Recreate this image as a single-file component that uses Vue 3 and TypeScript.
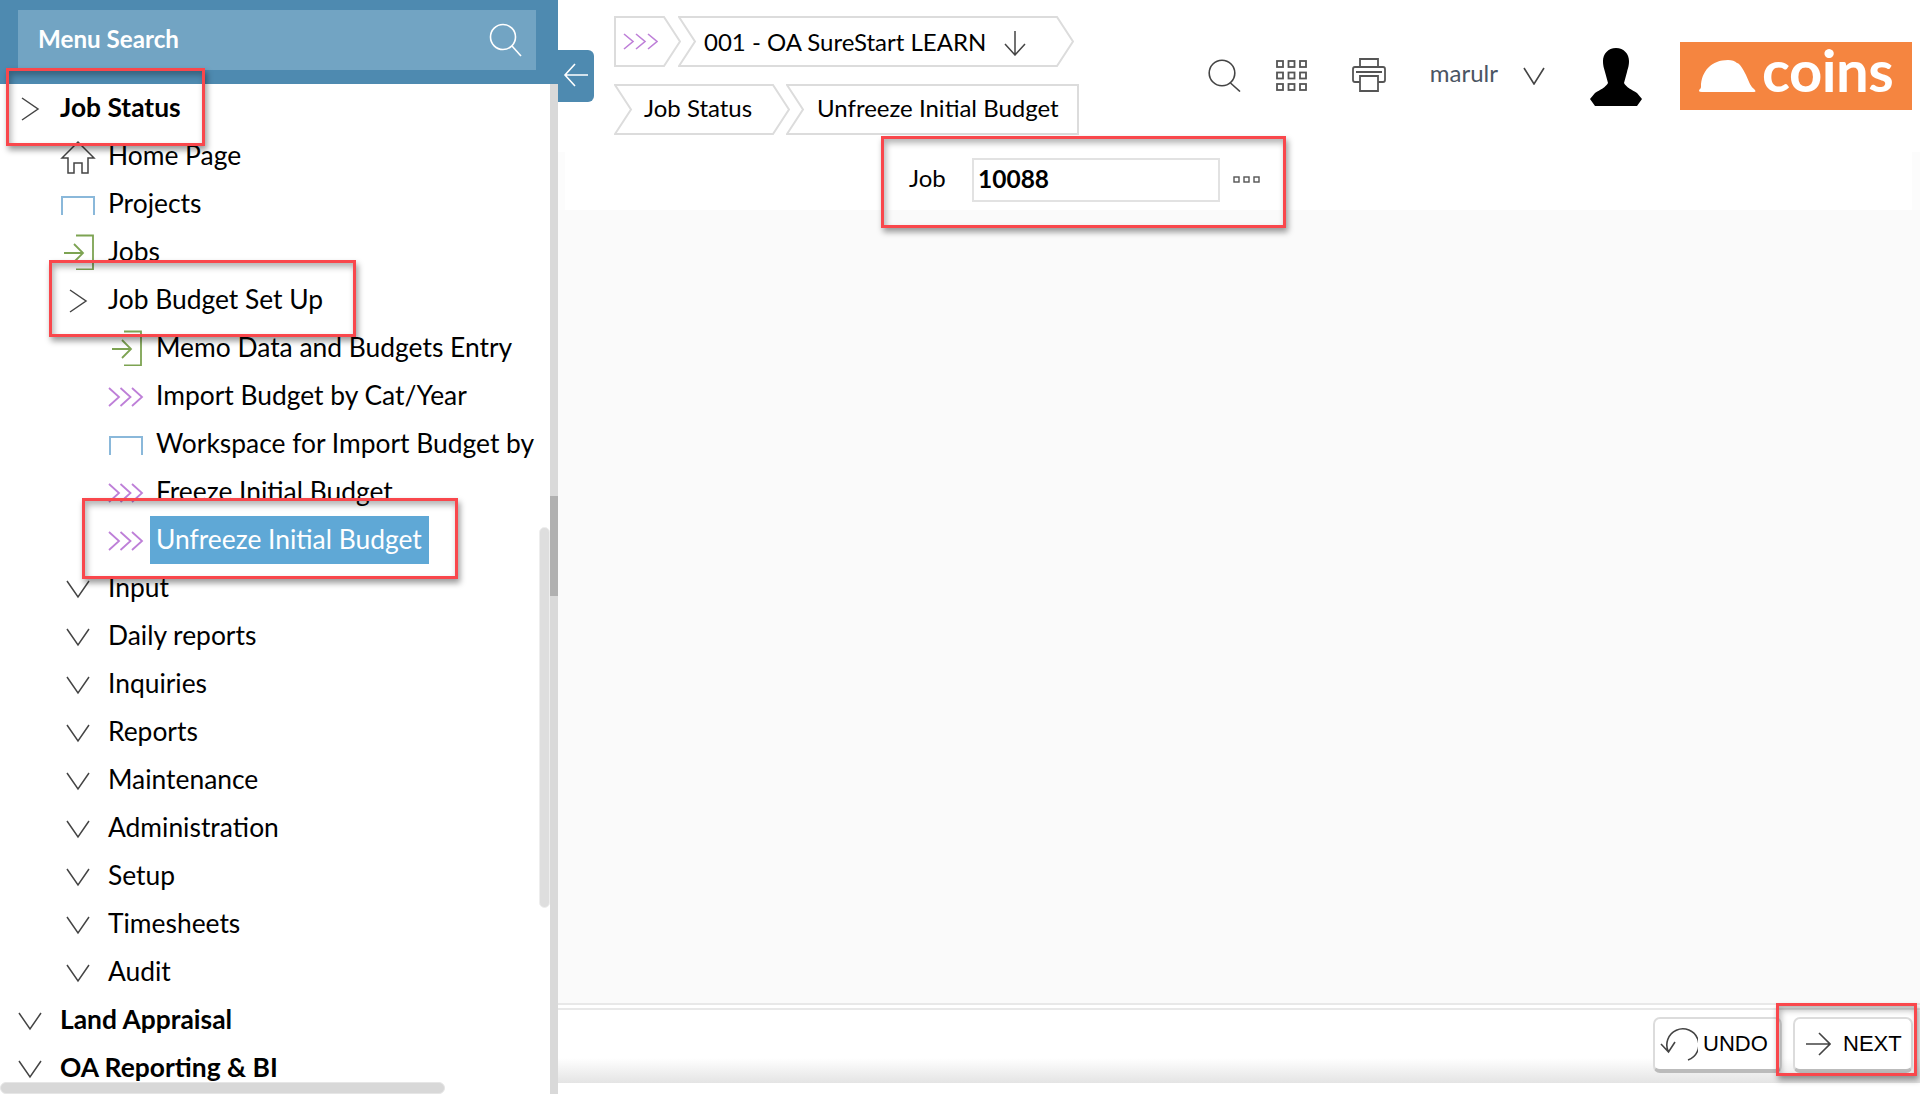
<script setup lang="ts">
type Icon = 'right' | 'down' | 'home' | 'rect' | 'enter' | 'run'
interface Row { label: string; level: 0 | 1 | 2; icon: Icon; active?: boolean }

const rows: Row[] = [
  { label: 'Job Status', level: 0, icon: 'right' },
  { label: 'Home Page', level: 1, icon: 'home' },
  { label: 'Projects', level: 1, icon: 'rect' },
  { label: 'Jobs', level: 1, icon: 'enter' },
  { label: 'Job Budget Set Up', level: 1, icon: 'right' },
  { label: 'Memo Data and Budgets Entry', level: 2, icon: 'enter' },
  { label: 'Import Budget by Cat/Year', level: 2, icon: 'run' },
  { label: 'Workspace for Import Budget by', level: 2, icon: 'rect' },
  { label: 'Freeze Initial Budget', level: 2, icon: 'run' },
  { label: 'Unfreeze Initial Budget', level: 2, icon: 'run', active: true },
  { label: 'Input', level: 1, icon: 'down' },
  { label: 'Daily reports', level: 1, icon: 'down' },
  { label: 'Inquiries', level: 1, icon: 'down' },
  { label: 'Reports', level: 1, icon: 'down' },
  { label: 'Maintenance', level: 1, icon: 'down' },
  { label: 'Administration', level: 1, icon: 'down' },
  { label: 'Setup', level: 1, icon: 'down' },
  { label: 'Timesheets', level: 1, icon: 'down' },
  { label: 'Audit', level: 1, icon: 'down' },
  { label: 'Land Appraisal', level: 0, icon: 'down' },
  { label: 'OA Reporting & BI', level: 0, icon: 'down' },
]
const grid = [0, 1, 2].flatMap((r) => [0, 1, 2].map((c) => ({ x: 1 + c * 11.5, y: 1 + r * 11.5 })))

// Only the "ti" pair takes Lato's discretionary ligature; ct/st/ch stay plain.
function parts(text: string): { text: string; lig: boolean }[] {
  return text.split(/(ti)/).filter(Boolean).map((p) => ({ text: p, lig: p === 'ti' }))
}
</script>

<template>
  <div class="app">
    <aside class="sidebar">
      <div class="side-head">
        <div class="menu-search">
          <span class="ms-text">Menu Search</span>
          <svg class="ms-icon" width="34" height="34" viewBox="0 0 34 34"><circle cx="14" cy="14" r="12.5" /><path d="M23 23 L32 33" /></svg>
        </div>
      </div>
      <button class="collapse" type="button" aria-label="Collapse">
        <svg width="26" height="26" viewBox="0 0 26 26"><path d="M25 13 H2 M12 2 L2 13 L12 24" /></svg>
      </button>
      <nav class="tree">
        <div v-for="r in rows" :key="r.label" class="row" :class="['l' + r.level, { active: r.active }]">
          <svg class="ico" :class="'i-' + r.icon" width="36" height="36" viewBox="0 0 36 36">
            <path v-if="r.icon === 'right'" d="M10 8 L26 19 L10 30" />
            <path v-else-if="r.icon === 'down'" d="M7 11 L18 27 L29 11" />
            <path v-else-if="r.icon === 'home'" d="M2 20 L18 4 L34 20 H28 V35 H22 V25 H14 V35 H8 V20 Z" />
            <path v-else-if="r.icon === 'rect'" d="M2 29 V11 H34 V29" />
            <path v-else-if="r.icon === 'enter'" d="M16 1.5 H33 V35.5 H16 M4 19 H23 M14 10 L23 19 L14 28" />
            <path v-else d="M1 10 L11 19 L1 28 M12.500 10 L22.500 19 L12.500 28 M24 10 L34 19 L24 28" />
          </svg>
          <span class="label"><span v-for="(p, i) in parts(r.label)" :key="i" :class="{ lig: p.lig }">{{ p.text }}</span></span>
        </div>
      </nav>
      <div class="track"><div class="track-thumb"></div></div>
      <div class="vpill"></div>
      <div class="hpill"></div>
    </aside>

    <main class="main">
      <header class="top">
        <div class="crumbs">
          <div class="crumb-row">
            <div class="crumb c-run">
              <svg class="shape" viewBox="0 0 67 51" preserveAspectRatio="none"><path d="M1 1 H50 L66 25.500 L50 50 H1 Z" /></svg>
              <svg class="run" width="35" height="17" viewBox="0 0 35 17"><path d="M1 1 L10 8.500 L1 16 M13 1 L22 8.500 L13 16 M25 1 L34 8.500 L25 16" /></svg>
            </div>
            <div class="crumb c-company">
              <svg class="shape" viewBox="0 0 396 51" preserveAspectRatio="none"><path d="M1 1 H379 L395 25.500 L379 50 H1 L17 25.500 Z" /></svg>
              <span class="ctext">001 - OA SureStart LEARN</span>
              <svg class="arrow-down" width="22" height="26" viewBox="0 0 22 26"><path d="M11 1 V24 M1 14 L11 25 L21 14" /></svg>
            </div>
          </div>
          <div class="crumb-row">
            <div class="crumb c-status">
              <svg class="shape" viewBox="0 0 176 51" preserveAspectRatio="none"><path d="M1 1 H159 L175 25.500 L159 50 H1 L17 25.500 Z" /></svg>
              <span class="ctext low">Job Status</span>
            </div>
            <div class="crumb c-page">
              <svg class="shape" viewBox="0 0 293 51" preserveAspectRatio="none"><path d="M1 1 H292 V50 H1 L17 25.500 Z" /></svg>
              <span class="ctext low"><span v-for="(p, i) in parts('Unfreeze Initial Budget')" :key="i" :class="{ lig: p.lig }">{{ p.text }}</span></span>
            </div>
          </div>
        </div>
        <div class="tools">
          <svg class="t t-search" width="33" height="33" viewBox="0 0 33 33"><circle cx="14" cy="14" r="12.800" /><path d="M22.500 24 L32 32.500" /></svg>
          <svg class="t t-grid" width="31" height="31" viewBox="0 0 31 31"><rect v-for="(g, i) in grid" :key="i" :x="g.x" :y="g.y" width="6" height="6" /></svg>
          <svg class="t t-print" width="34" height="34" viewBox="0 0 34 34"><path d="M8 9 V1 H26 V9 M8 24 H3 Q1 24 1 22 V11 Q1 9 3 9 H31 Q33 9 33 11 V22 Q33 24 31 24 H26 M8 18 H26 V33 H8 Z M4 14 H30" /></svg>
          <span class="user">marulr</span>
          <svg class="t t-chev" width="22" height="18" viewBox="0 0 22 18"><path d="M1 1 L11 17 L21 1" /></svg>
          <svg class="avatar" width="52" height="58" viewBox="0 0 52 58"><path d="M26 0 C18 0 13 6 13 13 C13 18 14 20 15 24 C16 28 17 31 18 35 C16 39 10 42 5 45 L0 51 L5 58 H47 L52 51 L47 45 C42 42 36 39 34 35 C35 31 36 28 37 24 C38 20 39 18 39 13 C39 6 34 0 26 0 Z" /></svg>
          <div class="logo">
            <svg width="60" height="34" viewBox="0 0 60 34"><path d="M1 32 C1 30 3 30 3 28 C3 12 14 1 30 1 C34 1 37 2 39 4 C41 4 44 8 48 16 C51 23 53 28 56 30 Q59 33 56 33 H4 Q1 33 1 32 Z" /></svg>
            <span class="logo-text">coins</span>
          </div>
        </div>
      </header>

      <form class="filter" @submit.prevent>
        <label class="filter-label" for="job">Job</label>
        <input id="job" class="filter-input" value="10088" />
        <svg class="dots" width="28" height="8" viewBox="0 0 28 8"><rect x="1" y="1" width="5" height="5" /><rect x="11" y="1" width="5" height="5" /><rect x="21" y="1" width="5" height="5" /></svg>
      </form>

      <section class="canvas"></section>

      <footer class="foot">
        <div class="actions">
          <button class="btn undo" type="button">
            <svg width="38" height="38" viewBox="0 0 38 38"><path d="M28 35 A16 16 0 1 0 8.500 27 M1 19 L8.500 27 L15 17" /></svg>
            <span>UNDO</span>
          </button>
          <button class="btn next" type="button">
            <svg width="26" height="24" viewBox="0 0 26 24"><path d="M1 12 H24 M14 1 L25 12 L14 23" /></svg>
            <span>NEXT</span>
          </button>
        </div>
      </footer>
    </main>

    <div class="mark m1"></div>
    <div class="mark m2"></div>
    <div class="mark m3"></div>
    <div class="mark m4"></div>
    <div class="mark m5"></div>
  </div>
</template>

<style scoped>
.app {
  position: relative;
  display: flex;
  width: 1920px;
  height: 1094px;
  overflow: hidden;
  background: #fff;
  font-family: Lato, "Liberation Sans", sans-serif;
  color: #000;
}
svg { display: block; fill: none; flex: none; }
.lig { font-variant-ligatures: common-ligatures discretionary-ligatures; }

.sidebar { position: relative; width: 558px; flex: none; display: flex; flex-direction: column; }
.side-head { height: 84px; flex: none; background: #4e8ab0; padding: 10px 22px 14px 18px; box-sizing: border-box; }
.menu-search {
  height: 60px; background: #72a4c3; color: #fff;
  display: flex; align-items: center; justify-content: space-between;
  padding: 0 13px 0 20px; font-size: 24.2px; font-weight: 700;
}
.ms-text { padding-bottom: 4px; }
.ms-icon circle, .ms-icon path { stroke: #fff; stroke-width: 1.6; }
.collapse {
  position: absolute; left: 558px; top: 50px; width: 36px; height: 52px; padding: 0 0 2px;
  background: #4e8ab0; border: 0; border-radius: 0 6px 6px 0;
  display: flex; align-items: center; justify-content: center; z-index: 2;
}
.collapse path { stroke: #fff; stroke-width: 1.6; }

.tree { flex: 1; overflow: hidden; }
.row { height: 48px; display: flex; align-items: center; gap: 12px; white-space: nowrap; font-size: 26.4px; }
.l0 { padding-left: 12px; font-weight: 700; }
.l1 { padding-left: 60px; }
.l2 { padding-left: 108px; }
.label { line-height: 46px; padding-bottom: 2px; }
.active .label { background: #5fa8d6; color: #fff; margin-left: -6px; padding: 0 7px 2px 6px; }
.ico path { stroke-width: 1.5; }
.i-right path, .i-down path, .i-home path { stroke: #444; }
.i-rect path { stroke: #8ab8da; stroke-width: 2; }
.i-enter path { stroke: #7da352; stroke-width: 1.8; }
.i-run path { stroke: #be7fd8; stroke-width: 1.8; }

.track { position: absolute; right: 0; top: 84px; bottom: 0; width: 8px; background: #d9d9d9; }
.track-thumb { margin-top: 412px; height: 100px; background: #b0b0b0; }
.vpill {
  position: absolute; left: 539px; top: 527px; width: 11px; height: 381px; box-sizing: border-box;
  background: #dedede; border: 1px solid #eee; border-radius: 6px;
}
.hpill {
  position: absolute; left: 0; top: 1082px; width: 445px; height: 12px; box-sizing: border-box;
  background: #d8d8d8; border: 1px solid #e6e6e6; border-radius: 6px;
}

.main { flex: 1; min-width: 0; display: flex; flex-direction: column; }
.top { height: 136px; flex: none; display: flex; padding: 16px 8px 0 56px; box-sizing: border-box; }
.crumbs { display: flex; flex-direction: column; gap: 17px; }
.crumb-row { display: flex; height: 51px; }
.crumb { position: relative; display: flex; align-items: center; font-size: 24px; box-sizing: border-box; white-space: nowrap; }
.shape { position: absolute; inset: 0; width: 100%; height: 100%; }
.shape path { stroke: #dcdcdc; stroke-width: 2; }
.crumb > .ctext, .crumb > .run, .crumb > .arrow-down { position: relative; }
.ctext { padding-bottom: 1px; }
.ctext.low { padding-bottom: 4px; }
.c-run { width: 67px; padding-left: 9px; }
.run path { stroke: #be7fd8; stroke-width: 1.6; }
.c-company { width: 396px; margin-left: -3px; padding-left: 26px; }
.arrow-down { margin-left: 18px; margin-top: 2px; }
.arrow-down path { stroke: #444; stroke-width: 1.5; }
.c-status { width: 176px; padding-left: 30px; }
.c-page { width: 293px; margin-left: -4px; padding-left: 31px; }

.tools { margin-left: auto; height: 118px; display: flex; align-items: center; }
.t path, .t circle, .t rect { stroke: #444; stroke-width: 1.6; }
.t-grid rect, .t-print path { stroke: #555; stroke-width: 1.8; }
.t-grid { margin-left: 35px; }
.t-print { margin-left: 45px; }
.user { margin-left: 44px; font-size: 24px; color: #4b5563; padding-bottom: 6px; }
.t-chev { margin-left: 25px; margin-top: 2px; }
.avatar { margin-left: 45px; margin-top: 4px; }
.avatar path { fill: #000; }
.logo {
  margin-left: 38px; margin-top: 2px; width: 232px; height: 68px; background: #f58540; color: #fff;
  display: flex; align-items: center; padding-left: 18px; gap: 4px; box-sizing: border-box;
}
.logo path { fill: #fff; }
.logo-text { font-size: 58px; font-weight: 700; letter-spacing: -0.5px; line-height: 68px; margin-top: -12px; }

.filter {
  height: 74px; flex: none; display: flex; align-items: flex-start; padding: 22px 0 0 351px; box-sizing: border-box;
  background: linear-gradient(#fff, #fff) 7px 0 / 1347px 100% no-repeat, linear-gradient(#fff 16px, #fcfcfc 16px);
}
.filter-label { width: 63px; height: 44px; line-height: 40px; font-size: 24px; }
.filter-input {
  width: 248px; height: 44px; box-sizing: border-box; border: 2px solid #e2e2e2; outline: 0;
  padding: 0 5px 4px 4px; font: 700 24.5px Lato, sans-serif; color: #000; background: #fff;
}
.dots { margin: 18px 0 0 13px; }
.dots rect { stroke: #555; stroke-width: 1.4; }

.canvas { flex: 1; background: #fafafa; }
.foot {
  height: 80px; flex: none; margin-bottom: 11px; box-sizing: border-box;
  border-top: 2px solid #e8e8e8;
  background: linear-gradient(#fff 0, #fff 68%, #e4e4e4 100%);
  padding: 3px 0 0;
}
.actions {
  border-top: 2px solid #e8e8e8; height: 100%; box-sizing: border-box;
  display: flex; justify-content: flex-end; gap: 11px; padding: 7px 7px 0 0;
}
.btn {
  height: 56px; box-sizing: border-box; background: #fff; padding: 0;
  border: 2px solid #dcdcdc; border-bottom: 4px solid #bbb; border-radius: 7px;
  display: flex; align-items: center; color: #000;
  font: 22px "Liberation Sans", Arial, sans-serif;
}
.btn path { stroke: #444; stroke-width: 1.6; }
.undo { width: 129px; padding-left: 5px; gap: 5px; }
.next { width: 120px; padding-left: 10px; gap: 12px; }

.mark {
  position: absolute; box-sizing: border-box; border: 3px solid #f9474c; pointer-events: none; z-index: 5;
  box-shadow: 2px 4px 6px rgba(0, 0, 0, 0.4), inset 2px 4px 6px rgba(0, 0, 0, 0.3);
}
.m1 { left: 6px; top: 68px; width: 199px; height: 78px; }
.m2 { left: 49px; top: 260px; width: 307px; height: 77px; }
.m3 { left: 82px; top: 498px; width: 376px; height: 81px; }
.m4 { left: 881px; top: 136px; width: 405px; height: 92px; }
.m5 { left: 1776px; top: 1003px; width: 141px; height: 73px; }
</style>
